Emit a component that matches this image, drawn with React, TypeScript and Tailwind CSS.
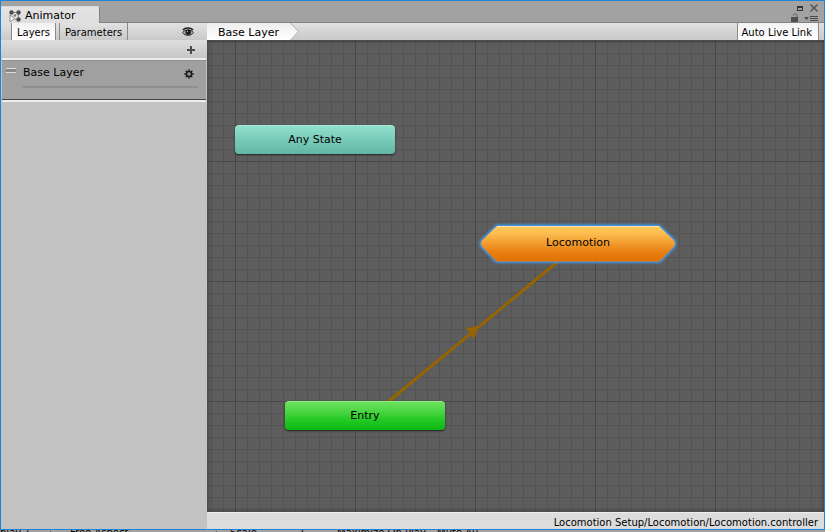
type StateNode = {
  name: string;
  className: string;
};

const NODES: StateNode[] = [
  { name: "Any State", className: "left-7 top-[85px] bg-linear-to-b from-[#8fe0cb] to-[#62b5a6] border-[#a9e8d8]" },
  { name: "Entry", className: "left-[78px] top-[361px] bg-linear-to-b from-[#6be25f] via-[#26cb26] via-60% to-[#05b910] border-[#8ee985]" },
];

const UNDERLYING = [
  { label: "play 1", className: "left-0" },
  { label: "▴", className: "left-[48px]" },
  { label: "Free Aspect", className: "left-[70px]" },
  { label: "▴", className: "left-[214px]" },
  { label: "Scale", className: "left-[230px]" },
  { label: "1", className: "left-[299px]" },
  { label: "Maximize On Play", className: "left-[337px]" },
  { label: "Mute Au", className: "left-[437px]" },
];

const GEAR_TEETH = [0, 45, 90, 135, 180, 225, 270, 315];

function TitleBar() {
  return (
    <header className="flex h-[22px] shrink-0 justify-between border-b border-[#828282] bg-[#a2a2a2]">
      <div className="mt-[5px] -mb-px flex h-[17px] w-[99px] items-center gap-1 rounded-tr-xs border-t border-r border-[#d9d9d9] border-r-[#828282] bg-linear-to-b from-[#e3e3e3] to-[#dedede] pt-[2px] pl-2 text-[11px]">
        <svg className="size-3 shrink-0" viewBox="0 0 12 12" fill="#4b4b4b">
          <path d="M4.500 2.500h3M9.500 4.500v3M7.500 9.500h-2" stroke="#8a8a8a" />
          <circle cx="2.500" cy="2.500" r="2.200" />
          <circle cx="9.500" cy="2.500" r="2.200" />
          <circle cx="9.500" cy="9.500" r="2.200" />
          <circle cx="6" cy="5.500" r="1.200" fill="#777" />
          <path d="M1 5l4.500 3.500L1 12z" fill="#fff" stroke="#777" strokeWidth=".8" />
        </svg>
        <h1>Animator</h1>
      </div>
      <div className="flex flex-col items-end gap-px pt-[3px] pr-[6px]">
        <div className="flex items-center gap-[7px]">
          <button aria-label="Maximize" className="h-[5px] w-[6px] border border-t-2 border-[#333]" />
          <button aria-label="Close">
            <svg className="size-2" viewBox="0 0 8 8" stroke="#4b4b4b" strokeWidth="1.2">
              <path d="M.5.5l7 7M7.500.5l-7 7" />
            </svg>
          </button>
        </div>
        <div className="flex items-end gap-[5px]">
          <button aria-label="Lock">
            <svg className="h-[9px] w-2" viewBox="0 0 8 9">
              <path d="M0 4h7v5H0z" fill="#4f4f4f" />
              <path d="M2.500 2.500C2.500.2 6 .2 6 2.500V4" fill="none" stroke="#5d5d5d" />
            </svg>
          </button>
          <button aria-label="Window menu">
            <svg className="h-[7px] w-[14px]" viewBox="0 0 14 7" fill="#4b4b4b">
              <path d="M0 2h5L2.500 5zM6 1h8v1H6zM6 3h8v1H6zM6 5h8v1H6z" />
            </svg>
          </button>
        </div>
      </div>
    </header>
  );
}

function EyeIcon() {
  return (
    <svg className="h-[10px] w-3" viewBox="0 0 12 10" fill="none">
      <path d="M.5 5.500C2.500 2.500 9 2 11.500 5.500C9.500 9 3 9.500.5 5.500Z" fill="#aaa" stroke="#222" />
      <path d="M.8 3C3 .3 8.500.3 11.200 3" stroke="#222" strokeWidth="1.400" />
      <circle cx="6.200" cy="5.200" r="2.600" fill="#1a1a1a" />
      <circle cx="5.500" cy="4.500" r=".7" fill="#bbb" />
    </svg>
  );
}

function GearIcon() {
  return (
    <svg className="size-[10px]" viewBox="0 0 10 10" fill="none" stroke="#1a1a1a">
      {GEAR_TEETH.map((angle) => (
        <path key={angle} d="M5 0.300V2" strokeWidth="1.400" transform={`rotate(${angle} 5 5)`} />
      ))}
      <circle cx="5" cy="5" r="2.500" strokeWidth="1.600" />
    </svg>
  );
}

function LayerPanel() {
  return (
    <aside className="flex w-[206px] shrink-0 flex-col bg-[#c2c2c2]">
      <div className="flex h-[17px] shrink-0 items-stretch bg-linear-to-b from-[#e2e2e2] to-[#c9c9c9] pl-[10px] text-[10px]">
        <button className="w-[45px] border-x border-[#8a8a8a] bg-linear-to-b from-[#f2f2f2] to-white pt-px">Layers</button>
        <button className="ml-[3px] w-[69px] border-x border-[#8a8a8a] pt-px">Parameters</button>
        <button aria-label="Toggle panel" className="mr-[13px] ml-auto">
          <EyeIcon />
        </button>
      </div>
      <div className="flex h-[18px] shrink-0 items-center justify-end bg-linear-to-b from-[#dedede] to-[#c6c6c6] pt-px pr-3">
        <button aria-label="Add layer">
          <svg className="block size-2" viewBox="0 0 8 8" stroke="#4b4b4b" strokeWidth="2">
            <path d="M4 0v8M0 4h8" />
          </svg>
        </button>
      </div>
      <ul className="mx-px border-y-2 border-[#ededed]">
        <li className="flex h-10 border-t border-b border-[#8f8f8f] border-b-[#444] bg-[#a0a0a0] pt-[6px] pr-2 pl-1">
          <span className="mt-px h-[5px] w-[10px] border-y border-[#ddd] bg-[#888]" />
          <div className="ml-[7px] flex-1">
            <div className="flex h-[13px] items-center justify-between pr-1 text-[11px]">
              Base Layer
              <button aria-label="Layer settings">
                <GearIcon />
              </button>
            </div>
            <div className="mt-[6px] h-[2px] bg-[#8e8e8e]" />
          </div>
        </li>
      </ul>
    </aside>
  );
}

function Graph() {
  return (
    <div className="relative flex-1 overflow-hidden bg-[#5d5d5d]">
      <div className="absolute inset-0 bg-[linear-gradient(to_right,#474747_1px,transparent_1px),linear-gradient(to_bottom,#474747_1px,transparent_1px),linear-gradient(to_right,#535353_1px,transparent_1px),linear-gradient(to_bottom,#535353_1px,transparent_1px)] bg-[size:120px_120px,120px_120px,12px_12px,12px_12px] bg-position-[28px_1px] shadow-[inset_0_0_5px_#3c3c3c]" />
      <svg className="absolute inset-0 size-full">
        <path d="M170 371L360 214" stroke="#966400" strokeWidth="3" />
        <path d="M272 286l-13 2 3 4 2 3 3 4z" fill="#966400" />
      </svg>
      {NODES.map((node) => (
        <button
          key={node.name}
          className={`absolute h-[29px] w-40 rounded-sm border-t text-[11px] shadow-[0_1px_2px_#222] ${node.className}`}
        >
          {node.name}
        </button>
      ))}
      <button className="absolute top-[182px] left-[269px] h-11 w-[204px] pb-[2px] text-[11px]">
        <svg className="absolute inset-0 size-full overflow-visible" viewBox="0 0 204 44">
          <defs>
            <linearGradient id="selected" x2="0" y2="1">
              <stop stopColor="#ffc95c" />
              <stop offset=".2" stopColor="#fdbe50" />
              <stop offset=".75" stopColor="#e87d10" />
              <stop offset="1" stopColor="#e27203" />
            </linearGradient>
            <filter id="glow" x="-10%" y="-30%" width="120%" height="160%">
              <feGaussianBlur stdDeviation="1.200" />
            </filter>
          </defs>
          <path
            d="M22 4H182Q184 4 185 6L198 18.500Q200 21.500 198 24.500L185 38Q184 39.500 182 39.500H22Q20 39.500 19 38L6 24.500Q4 21.500 6 18.500L19 6Q20 4 22 4Z"
            fill="#3d9bf5"
            stroke="#3d9bf5"
            strokeWidth="3"
            filter="url(#glow)"
          />
          <path
            d="M22 4H182Q184 4 185 6L198 18.500Q200 21.500 198 24.500L185 38Q184 39.500 182 39.500H22Q20 39.500 19 38L6 24.500Q4 21.500 6 18.500L19 6Q20 4 22 4Z"
            fill="url(#selected)"
          />
          <path d="M21 4.500H183" stroke="#ffe9b5" />
        </svg>
        <span className="relative">Locomotion</span>
      </button>
    </div>
  );
}

export default function App() {
  return (
    <div className="flex h-screen flex-col overflow-hidden bg-[#a2a2a2] font-['DejaVu_Sans',sans-serif] text-black">
      <div className="flex min-h-0 flex-1 flex-col border border-[#1f84d6]">
        <TitleBar />
        <div className="flex min-h-0 flex-1">
          <LayerPanel />
          <main className="flex min-w-0 flex-1 flex-col">
            <nav className="flex h-[17px] shrink-0 items-stretch bg-linear-to-b from-[#e0e0e0] to-[#c9c9c9] text-[11px]">
              <a href="#base" className="flex w-[92px] items-center bg-[#b0b0b0] [clip-path:polygon(0_0,84px_0,100%_50%,84px_100%,0_100%)]">
                <span className="flex h-full w-[91px] items-center bg-linear-to-b from-[#eee] to-white pt-[3px] pl-[11px] [clip-path:polygon(0_0,83px_0,100%_50%,83px_100%,0_100%)]">
                  Base Layer
                </span>
              </a>
              <button className="mr-[5px] ml-auto border-x border-[#8a8a8a] bg-linear-to-b from-[#f2f2f2] to-white pt-px pr-[6px] pl-1 text-[10px]">
                Auto Live Link
              </button>
            </nav>
            <Graph />
            <footer className="flex h-[17px] shrink-0 items-center justify-end border-t border-[#eee] bg-[#dcdcdc] pt-[2px] pr-[6px] text-[10px]">
              Locomotion Setup/Locomotion/Locomotion.controller
            </footer>
          </main>
        </div>
      </div>
      {/* toolbar of the window underneath, peeking out */}
      <div className="relative h-[2px] shrink-0 overflow-hidden bg-[#a2a2a2] text-[10px] leading-[10px]">
        {UNDERLYING.map((item, i) => (
          <span key={i} className={`absolute -top-[2px] whitespace-nowrap ${item.className}`}>
            {item.label}
          </span>
        ))}
      </div>
    </div>
  );
}
